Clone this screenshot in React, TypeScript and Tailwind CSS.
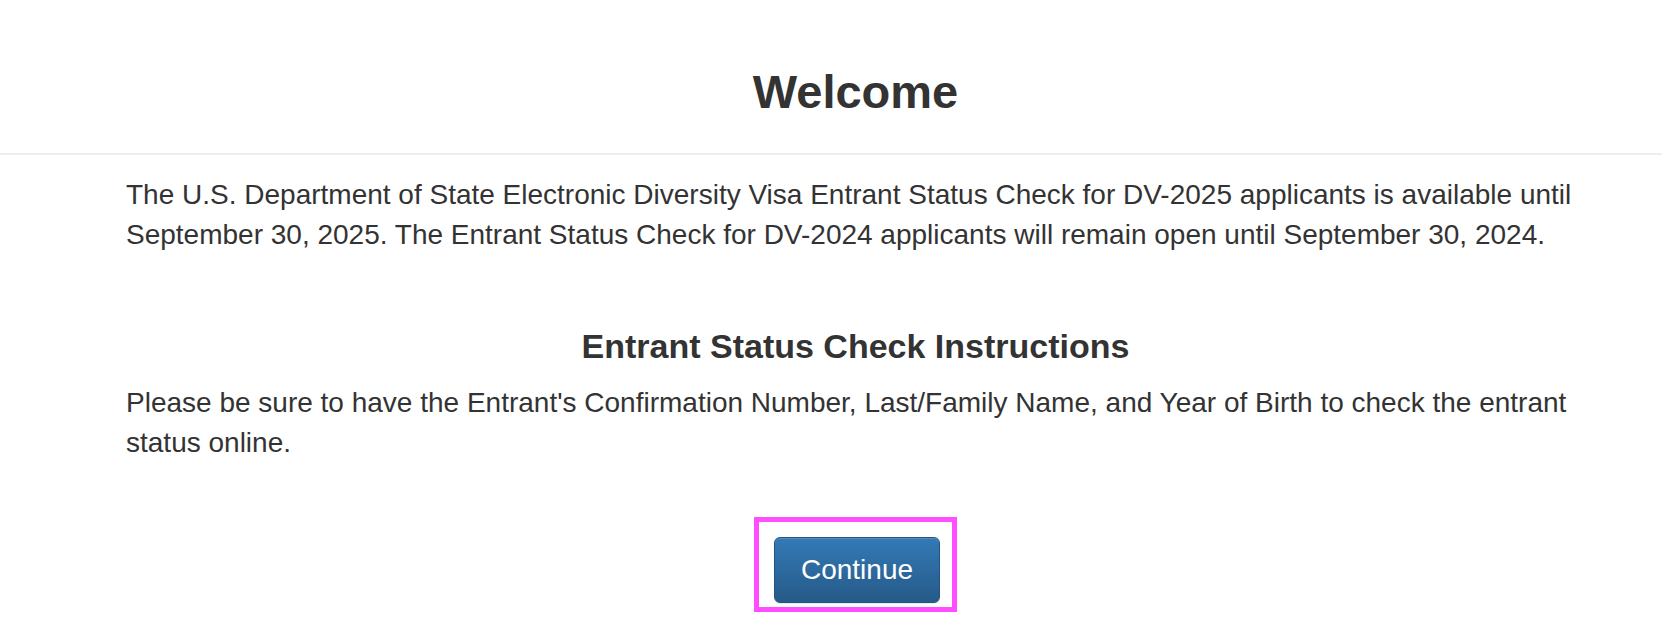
export default function App() {
  return (
    <div className="min-h-[626px] bg-white text-[#333333] font-['Liberation_Sans',Arial,sans-serif]">
      <header className="pt-[65px] pb-[35px] border-b-2 border-[#eeeeee]">
        <div className="ml-[126px] w-[1459px]">
          <h1 className="text-center text-[47px] leading-[53px] font-bold">Welcome</h1>
        </div>
      </header>

      <main className="ml-[126px] w-[1459px]">
        <p className="mt-[20px] text-[28px] leading-[40px]">
          The U.S. Department of State Electronic Diversity Visa Entrant Status Check for DV-2025 applicants is available until
          September 30, 2025. The Entrant Status Check for DV-2024 applicants will remain open until September 30, 2024.
        </p>

        <h3 className="mt-[72px] text-center text-[34px] leading-[38px] font-bold">
          Entrant Status Check Instructions
        </h3>
        <p className="mt-[18px] text-[28px] leading-[40px]">
          Please be sure to have the Entrant's Confirmation Number, Last/Family Name, and Year of Birth to check the entrant
          status online.
        </p>

        <div className="mt-[54px] flex justify-center">
          <div className="border-[5px] border-[#ff4dff] pl-[15px] pt-[15px] pr-[12px] pb-[4px]">
            <button
              type="button"
              className="h-[66px] w-[166px] rounded-[6px] border border-[#245580] bg-gradient-to-b from-[#337ab7] to-[#265a88] text-[28px] text-white shadow-[inset_0_1px_0_rgba(255,255,255,0.15),0_1px_1px_rgba(0,0,0,0.1)]"
            >
              Continue
            </button>
          </div>
        </div>
      </main>
    </div>
  );
}
